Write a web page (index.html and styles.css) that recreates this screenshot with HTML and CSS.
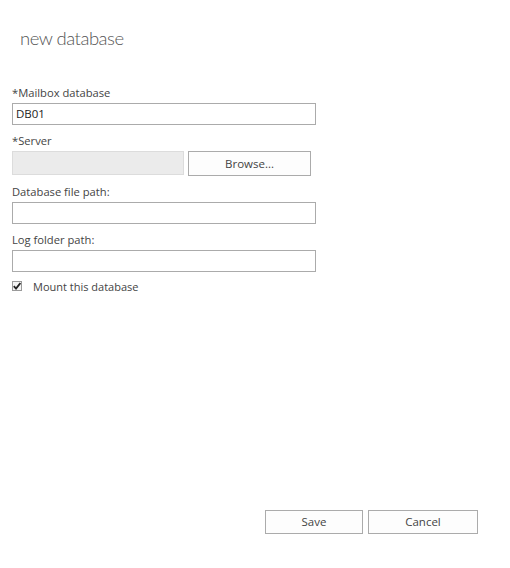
FILE: index.html
```html
<!DOCTYPE html>
<html>
<head>
<meta charset="utf-8">
<link rel="stylesheet" href="styles.css">
</head>
<body>
<div class="page">
  <h1 class="title">new database</h1>
  <form class="form">
    <label class="label">*Mailbox database</label>
    <div class="input">DB01</div>
    <label class="label">*Server</label>
    <div class="server-row">
      <div class="input disabled"></div>
      <button type="button" class="btn browse">Browse...</button>
    </div>
    <label class="label">Database file path:</label>
    <div class="input"></div>
    <label class="label">Log folder path:</label>
    <div class="input"></div>
    <div class="check-row">
      <span class="checkbox"><svg width="8" height="8" viewBox="0 0 8 8"><path d="M0.8 4.2 L3 6.6 L7.4 1" fill="none" stroke="#222" stroke-width="1.8"/></svg></span>
      <span class="check-label">Mount this database</span>
    </div>
  </form>
  <div class="footer">
    <button type="button" class="btn action">Save</button>
    <button type="button" class="btn action cancel">Cancel</button>
  </div>
</div>
</body>
</html>
```
FILE: styles.css
```css
html, body {
  margin: 0;
  padding: 0;
  background: #fff;
}
body {
  font-family: "Open Sans", "Liberation Sans", sans-serif;
  color: #444;
}
.page {
  height: 568px;
  display: flex;
  flex-direction: column;
  box-sizing: border-box;
}
.title {
  margin: 0;
  padding: 26px 0 0 20px;
  font-family: Lato, "Open Sans", sans-serif;
  font-size: 18.5px;
  letter-spacing: -0.5px;
  font-weight: 300;
  color: #555;
  line-height: 24px;
  height: 24px;
}
.form {
  display: flex;
  flex-direction: column;
  padding: 34px 0 0 12px;
  width: 304px;
}
.label {
  display: block;
  font-size: 11.2px;
  line-height: 18px;
  color: #444;
  height: 18px;
  margin-bottom: 1px;
}
.input {
  box-sizing: border-box;
  height: 22px;
  border: 1px solid #ababab;
  background: #fff;
  font-size: 11.5px;
  line-height: 20px;
  padding-left: 3px;
  color: #222;
  margin-bottom: 7px;
}
.server-row {
  display: flex;
  align-items: flex-start;
  gap: 4px;
  width: 300px;
  margin-bottom: 7px;
}
.input.disabled {
  width: 172px;
  height: 24px;
  background: #ebebeb;
  border: 1px solid #dcdcdc;
  margin: 0;
}
.btn {
  box-sizing: border-box;
  font-family: "Open Sans", "Liberation Sans", sans-serif;
  font-size: 11.5px;
  color: #444;
  background: #fdfdfd;
  border: 1px solid #ababab;
  padding: 0;
  margin: 0;
  height: 25px;
  line-height: 22px;
}
.browse {
  width: 123px;
}
.check-row {
  display: flex;
  align-items: center;
  margin-top: 0;
  height: 14px;
}
.checkbox {
  box-sizing: border-box;
  width: 10px;
  height: 10px;
  border: 1px solid #9a9a9a;
  background: #f4f4f4;
  display: flex;
  align-items: center;
  justify-content: center;
}
.checkbox svg {
  display: block;
}
.check-label {
  margin-left: 11px;
  font-size: 11px;
  color: #444;
}
.footer {
  margin-top: auto;
  display: flex;
  gap: 5px;
  padding: 0 0 34px 265px;
}
.action {
  width: 98px;
  height: 24px;
}
.cancel {
  width: 110px;
}
```
